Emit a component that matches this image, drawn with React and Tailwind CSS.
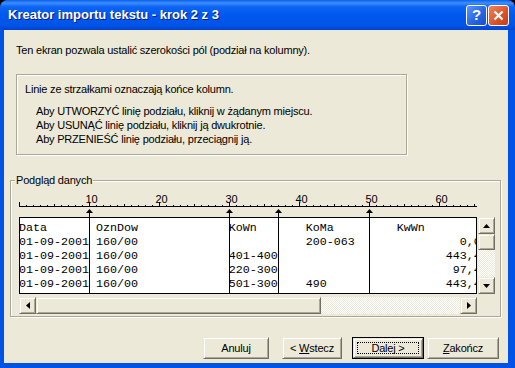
import React from "react";

const raised =
  "border border-t-[#ECE9D8] border-l-[#ECE9D8] border-r-[#716F64] border-b-[#716F64] shadow-[inset_1px_1px_0_#fff,inset_-1px_-1px_0_#ACA899] bg-[#ECE9D8]";
const track =
  "bg-[image:repeating-conic-gradient(#fff_0_25%,#ECE9D8_0_50%)] bg-[length:2px_2px]";

const CW = 7; // char width of the preview font
const breaks = [10, 30, 37, 50];

// builds a fixed-width line by placing each piece at its column
function line(parts) {
  let s = "";
  parts.forEach(([col, text]) => {
    s = s.padEnd(col, " ") + text;
  });
  return s;
}

const rows = [
  line([[0, "Data"], [11, "OznDow"], [30, "KoWn"], [41, "KoMa"], [54, "KwWn"]]),
  line([[0, "01-09-2001"], [11, "160/00"], [41, "200-063"], [63, "0,00"]]),
  line([[0, "01-09-2001"], [11, "160/00"], [30, "401-400"], [61, "443,48"]]),
  line([[0, "01-09-2001"], [11, "160/00"], [30, "220-300"], [62, "97,40"]]),
  line([[0, "01-09-2001"], [11, "160/00"], [30, "501-300"], [41, "490"], [61, "443,48"]]),
];

function Ruler() {
  const ticks = [];
  for (let c = 0; c <= 65; c++) {
    const h = c % 10 === 0 ? 4 : c % 5 === 0 ? 2 : 1;
    ticks.push(<rect key={c} x={c * CW} y={16 - h} width="1" height={h} fill="#000" />);
  }
  return (
    <div className="relative h-[27px] w-[458px]">
      <svg width="458" height="27" className="absolute left-0 top-0">
        <rect x="0" y="16" width="458" height="1" fill="#000" />
        {ticks}
        {breaks.map((c) => (
          <g key={c}>
            <polygon points={`${c * CW + 0.5},19 ${c * CW + 4},23 ${c * CW - 3},23`} fill="#000" />
            <rect x={c * CW} y="22" width="1" height="5" fill="#000" />
          </g>
        ))}
      </svg>
      {[10, 20, 30, 40, 50, 60].map((n) => (
        <span
          key={n}
          className="absolute top-[4px] -translate-x-1/2 text-[11px] leading-[11px] tracking-normal text-black"
          style={{ left: n * CW + 2.5 }}
        >
          {n}
        </span>
      ))}
    </div>
  );
}

function Arrow({ dir }) {
  const pts = {
    up: "0,4 3.5,0 7,4",
    down: "0,0 7,0 3.5,4",
    left: "4,0 4,7 0,3.5",
    right: "0,0 0,7 4,3.5",
  }[dir];
  const vertical = dir === "up" || dir === "down";
  return (
    <svg width={vertical ? 7 : 4} height={vertical ? 4 : 7}>
      <polygon points={pts} fill="#000" />
    </svg>
  );
}

function Preview() {
  return (
    <div className="flex flex-col">
      <Ruler />
      <div className="flex gap-[1px]">
        <div className="relative h-[77px] w-[458px] overflow-hidden border border-black bg-white pt-[3px]">
          {breaks.map((c) => (
            <div
              key={c}
              className="absolute bottom-0 top-0 w-px bg-black"
              style={{ left: c * CW - 1 }}
            />
          ))}
          {rows.map((r, i) => (
            <div
              key={i}
              className="-ml-px h-[14px] whitespace-pre font-['Liberation_Mono',monospace] text-[11.67px] leading-[14px] tracking-normal text-black"
            >
              {r}
            </div>
          ))}
        </div>
        <div className={`flex h-[77px] w-[17px] flex-col ${track}`}>
          <div className={`flex h-[17px] items-center justify-center ${raised}`}>
            <Arrow dir="up" />
          </div>
          <div className={`h-[16px] ${raised}`} />
          <div className="flex-1" />
          <div className={`flex h-[17px] items-center justify-center ${raised}`}>
            <Arrow dir="down" />
          </div>
        </div>
      </div>
      <div className={`mt-[3px] flex h-[17px] w-[458px] ${track}`}>
        <div className={`flex w-[17px] items-center justify-center ${raised}`}>
          <Arrow dir="left" />
        </div>
        <div className={`w-[285px] ${raised}`} />
        <div className="flex-1" />
        <div className={`flex w-[17px] items-center justify-center ${raised}`}>
          <Arrow dir="right" />
        </div>
      </div>
    </div>
  );
}

function Btn({ children, className = "", focused = false }) {
  if (focused) {
    return (
      <div className={`h-[22px] border border-black ${className}`}>
        <div className={`flex h-full p-[3px] ${raised}`}>
          <span className="flex flex-1 items-center justify-center border border-dotted border-black">
            <span>{children}</span>
          </span>
        </div>
      </div>
    );
  }
  return (
    <div className={`flex h-[22px] items-center justify-center ${raised} ${className}`}>
      <span>{children}</span>
    </div>
  );
}

export default function App() {
  return (
    <div className="h-[368px] w-[515px] overflow-hidden bg-black font-['Liberation_Sans',Arial,sans-serif] text-[11px] tracking-[-0.2px] text-black">
      <div className="flex h-full flex-col rounded-t-[8px] bg-[#0053E6]">
        {/* title bar */}
        <div className="flex h-[30px] shrink-0 items-center rounded-t-[8px] bg-[linear-gradient(to_bottom,#0A5FEA_0%,#3D8FFE_10%,#0E65F2_22%,#0058EE_50%,#0055E8_85%,#0043CF_100%)] pl-[8px] pr-[6px]">
          <span className="flex-1 text-[13px] font-bold tracking-normal text-white [text-shadow:1px_1px_#0A1883]">
            Kreator importu tekstu - krok 2 z 3
          </span>
          <div className="flex gap-[1px] pt-[1px]">
            <div className="flex h-[21px] w-[21px] items-center justify-center rounded-[3px] border border-white bg-[linear-gradient(135deg,#5B95FA,#2463E2_60%,#1A4FC9)] text-[15px] font-bold text-white">
              ?
            </div>
            <div className="flex h-[21px] w-[21px] items-center justify-center rounded-[3px] border border-white bg-[linear-gradient(135deg,#EE8460,#DC5228_60%,#C73E13)]">
              <svg width="11" height="11">
                <path d="M1.5 1.5 L9.5 9.5 M9.5 1.5 L1.5 9.5" stroke="#fff" strokeWidth="2.2" />
              </svg>
            </div>
          </div>
        </div>

        {/* dialog body */}
        <div className="mb-[5px] ml-[4px] mr-[7px] flex flex-1 flex-col bg-[#ECE9D8]">
          <p className="ml-[12px] mt-[14px] leading-[13px]">
            Ten ekran pozwala ustalić szerokości pól (podział na kolumny).
          </p>

          <div className="ml-[12px] mt-[17px] h-[81px] w-[391px] border border-[#ACA899] pl-[8px] pt-[8px] shadow-[inset_1px_1px_0_#fff,1px_1px_0_#fff]">
            <p className="leading-[13px]">Linie ze strzałkami oznaczają końce kolumn.</p>
            <div className="mt-[8px] pl-[11px] leading-[14px]">
              <p>Aby UTWORZYĆ linię podziału, kliknij w żądanym miejscu.</p>
              <p>Aby USUNĄĆ linię podziału, kliknij ją dwukrotnie.</p>
              <p>Aby PRZENIEŚĆ linię podziału, przeciągnij ją.</p>
            </div>
          </div>

          <div className="relative ml-[6px] mt-[25px] h-[137px] w-[491px] border border-[#ACA899] pl-[8px] pt-[9px] shadow-[inset_1px_1px_0_#fff,1px_1px_0_#fff]">
            <span className="absolute left-[4px] top-[-7px] bg-[#ECE9D8] px-[1px] leading-[13px]">
              Podgląd danych
            </span>
            <Preview />
          </div>

          <div className="mr-[9px] mt-[20px] flex justify-end">
            <Btn className="w-[66px]">Anuluj</Btn>
            <Btn className="ml-[13px] w-[60px]">
              &lt; <span className="underline">W</span>stecz
            </Btn>
            <Btn className="ml-[10px] w-[72px]" focused>
              Dalej &gt;
            </Btn>
            <Btn className="ml-[3px] w-[72px]">
              <span className="underline">Z</span>akończ
            </Btn>
          </div>
        </div>
      </div>
    </div>
  );
}
